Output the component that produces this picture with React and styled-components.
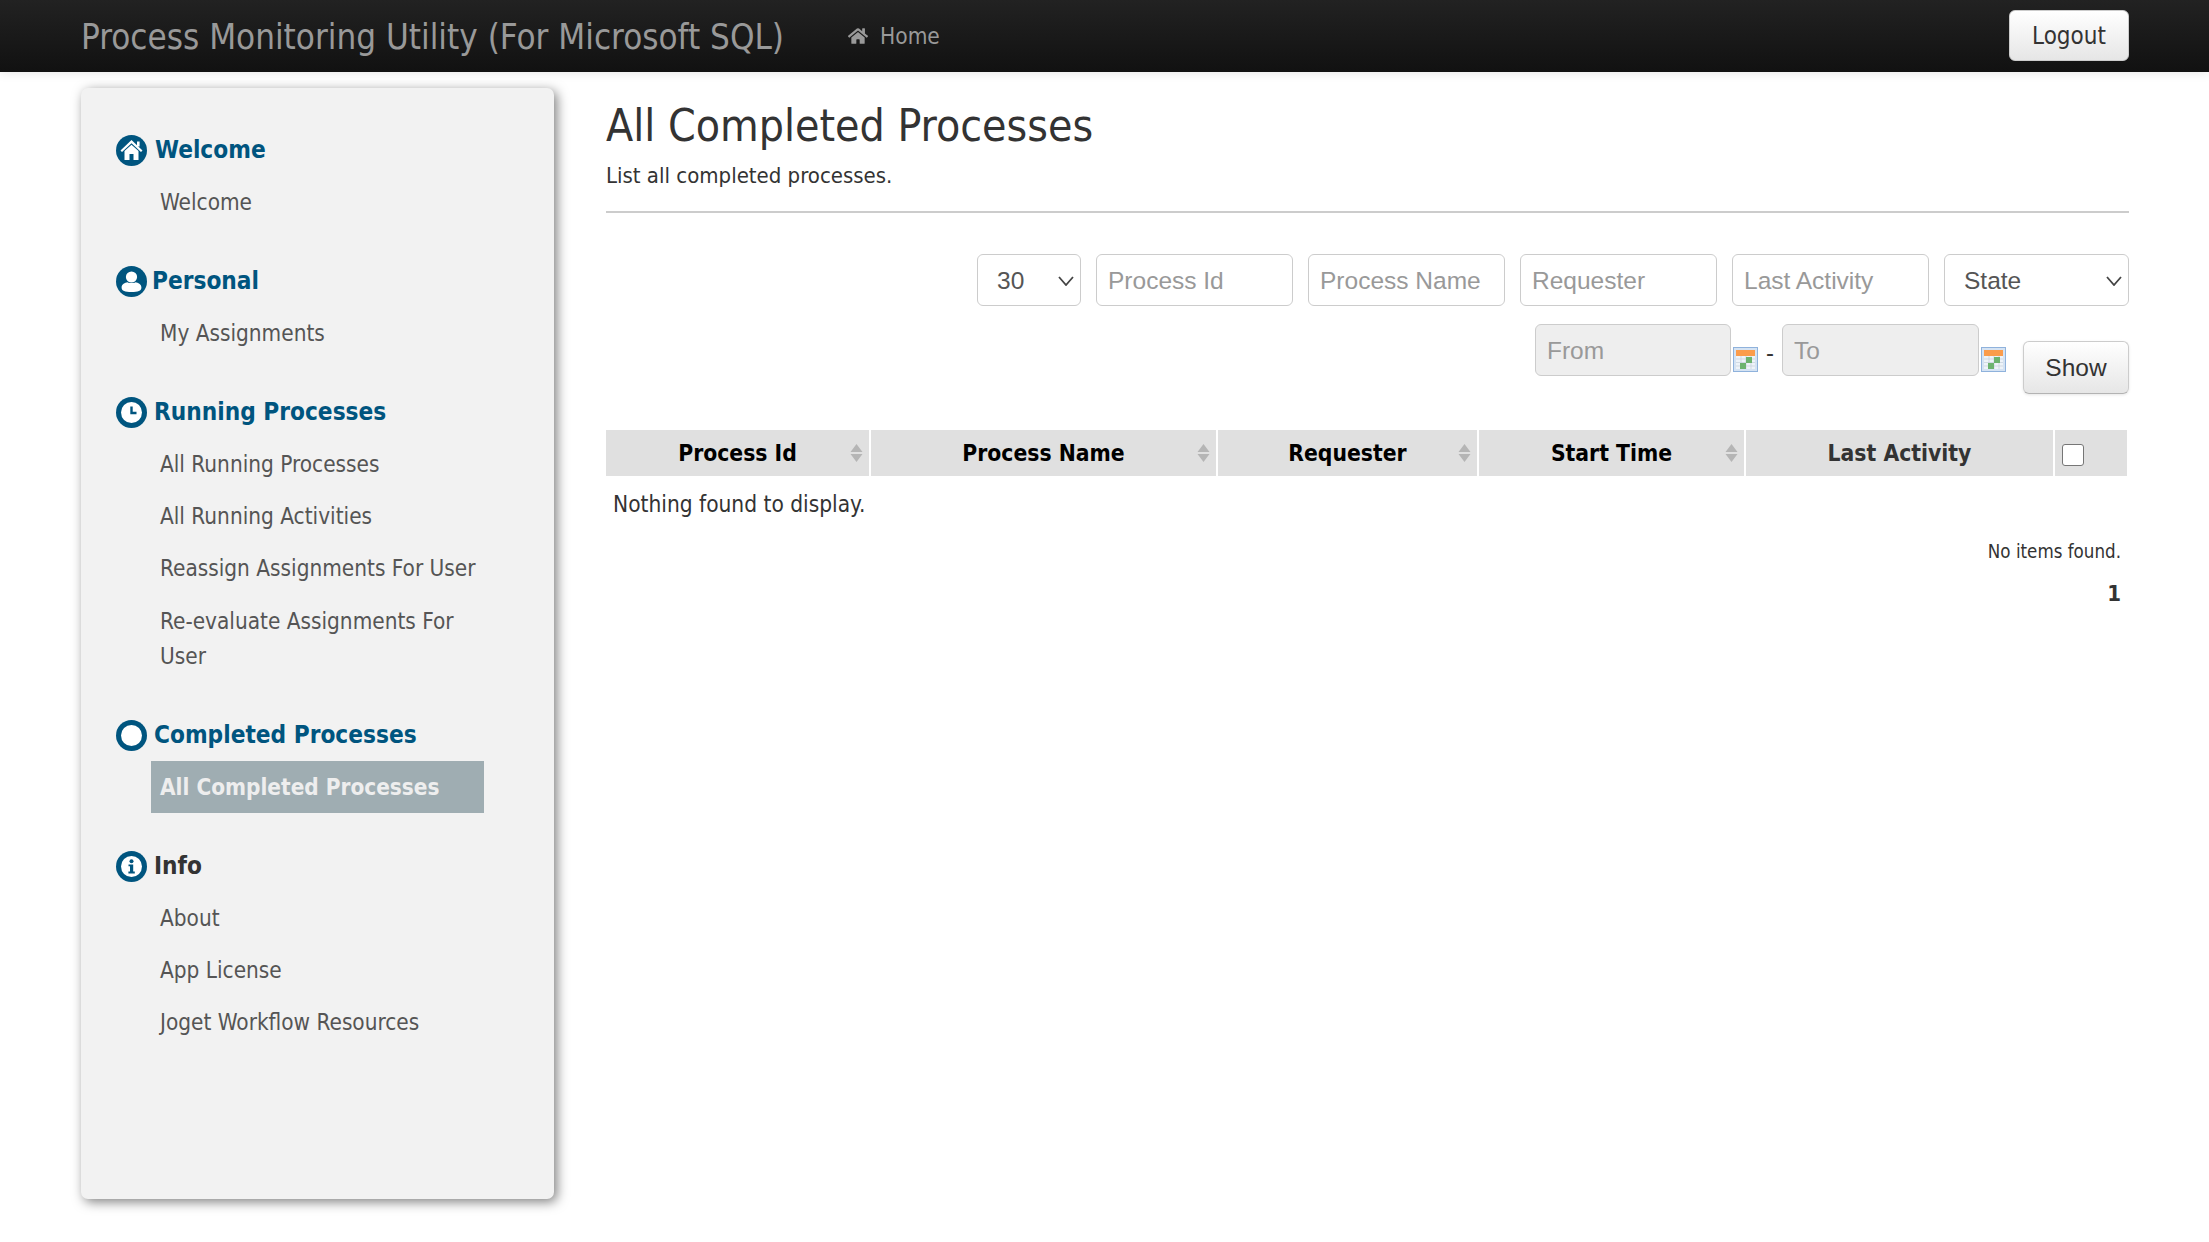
import React from 'react'
import styled, { createGlobalStyle } from 'styled-components'
import { FaHome } from 'react-icons/fa'

const TAHOMA = `"DejaVu Sans Condensed", "DejaVu Sans", sans-serif`
const ARIAL = `"Liberation Sans", Arial, sans-serif`

const Global = createGlobalStyle`
    html, body { margin: 0; padding: 0; background: #fff; }
    body { font-family: ${TAHOMA}; font-stretch: condensed; color: #333; }
    * { box-sizing: border-box; }
`

const Page = styled.div`
    width: 2209px;
    height: 1242px;
    overflow: hidden;
`

// Top bar
const Header = styled.header`
    height: 72px;
    padding: 0 80px 0 81px;
    display: flex;
    align-items: center;
    background: linear-gradient(#222222, #111111);
    box-shadow: 0 1px 10px rgba(0, 0, 0, 0.1);
`
const Brand = styled.div`
    font-size: 34.7px;
    color: #999;
    margin-top: 1px;
`
const HomeLink = styled.a`
    display: flex;
    align-items: center;
    gap: 12px;
    margin-left: 64px;
    font-size: 22.5px;
    color: #999;
`
const LogoutButton = styled.button`
    margin-left: auto;
    margin-top: -2px;
    padding-top: 3px;
    width: 120px;
    height: 51px;
    font-family: ${TAHOMA};
    font-stretch: condensed;
    font-size: 24px;
    color: #333;
    border: 1px solid #ccc;
    border-radius: 6px;
    background: linear-gradient(#ffffff, #e6e6e6);
`

// Body
const Layout = styled.div`
    display: flex;
    align-items: flex-start;
    padding: 16px 80px 0 81px;
    gap: 52px;
`
const Sidebar = styled.nav`
    width: 473px;
    height: 1111px;
    flex: none;
    padding: 43px 35px 0;
    background: #f2f2f2;
    border-radius: 7px;
    box-shadow: 3px 3px 12px rgba(0, 0, 0, 0.5);
`
const Section = styled.section`
    margin-bottom: 34px;
`
const SectionTitle = styled.h3`
    margin: 0 0 7px;
    height: 38px;
    display: flex;
    align-items: center;
    gap: ${p => p.$gap}px;
    font-size: 24.2px;
    font-weight: 700;
    color: ${p => p.$dark ? '#333' : '#00557f'};
`
const MenuItem = styled.a`
    display: block;
    width: 333px;
    margin-left: 35px;
    padding: 8.6px 0 8.6px 9px;
    font-size: 22.4px;
    line-height: 35px;
    font-weight: ${p => p.$active ? 700 : 400};
    color: ${p => p.$active ? '#eeeeee' : '#555'};
    background: ${p => p.$active ? '#9fadb2' : 'transparent'};
`
const IconSvg = styled.svg`
    width: 31px;
    height: 31px;
    flex: none;
`

const Main = styled.main`
    flex: 1;
    min-width: 0;
`
const PageTitle = styled.h1`
    margin: 13px 0 0;
    font-size: 44.2px;
    line-height: 50px;
    font-weight: 400;
    color: #333;
`
const PageSub = styled.p`
    margin: 10px 0 0;
    font-size: 22px;
    line-height: 30px;
    color: #333;
`
const Rule = styled.hr`
    margin: 20px 0 0;
    border: 0;
    border-top: 2px solid #ccc;
`

// Filters
const FilterRow = styled.div`
    display: flex;
    justify-content: flex-end;
    align-items: flex-start;
    gap: 15px;
    margin-top: ${p => p.$top}px;
`
const TextInput = styled.input`
    width: ${p => p.$w || 197}px;
    height: 52px;
    padding: 1px 11px 0;
    font-family: ${ARIAL};
    font-size: 24.5px;
    color: #555;
    border: 1px solid #ccc;
    border-radius: 6px;
    background: ${p => p.readOnly ? '#eeeeee' : '#fff'};
    &::placeholder { color: #999; opacity: 1; }
`
const SelectBox = styled.div`
    position: relative;
    width: ${p => p.$w}px;
    height: 52px;
    padding: 1px 0 0 19px;
    display: flex;
    align-items: center;
    font-family: ${ARIAL};
    font-size: 24.5px;
    color: #555;
    border: 1px solid #ccc;
    border-radius: 6px;
    background: #fff;
    svg { position: absolute; right: 6px; top: 21px; }
`
const DateGroup = styled.div`
    display: flex;
    align-items: flex-start;
`
const CalendarSvg = styled.svg`
    width: 25px;
    height: 25px;
    margin: 23px 0 0 2px;
    flex: none;
`
const Dash = styled.span`
    width: 24px;
    text-align: center;
    font-family: ${ARIAL};
    font-size: 24px;
    line-height: 58px;
    color: #333;
`
const ShowButton = styled.button`
    width: 106px;
    height: 53px;
    margin: 17px 0 0 2px;
    font-family: ${ARIAL};
    font-size: 24.5px;
    color: #333;
    border: 1px solid #ccc;
    border-bottom-color: #b3b3b3;
    border-radius: 6px;
    background: linear-gradient(#ffffff, #e6e6e6);
    box-shadow: 0 1px 3px rgba(0, 0, 0, 0.1);
`

// Table
const Table = styled.table`
    width: 1521px;
    margin-top: 36px;
    border-collapse: collapse;
    table-layout: fixed;
`
const HeadCell = styled.th`
    position: relative;
    height: 46px;
    padding: 0;
    font-size: 22.7px;
    font-weight: 700;
    color: ${p => p.$soft ? '#333' : '#000'};
    background: #e0e0e0;
    border-left: 2px solid #fff;
    &:first-child { border-left: 0; }
    svg { position: absolute; right: 6px; top: 13px; }
`
const Check = styled.span`
    display: block;
    width: 22px;
    height: 22px;
    margin-left: 7px;
    margin-top: 3px;
    border: 1px solid #767676;
    border-radius: 3px;
    background: #fff;
`
const EmptyRow = styled.div`
    padding: 0 0 0 7px;
    margin-top: 11px;
    font-size: 22.5px;
    line-height: 34px;
    color: #333;
`
const Banner = styled.div`
    margin-top: 17px;
    padding-right: 8px;
    text-align: right;
    font-size: 18.6px;
    line-height: 28px;
    color: #333;
`
const PageNum = styled.div`
    margin-top: 14px;
    padding-right: 8px;
    text-align: right;
    font-size: 22px;
    line-height: 28px;
    font-weight: 700;
    color: #333;
`

const Circle = ({ children }) => (
    <IconSvg viewBox="0 0 31 31">
        <circle cx="15.5" cy="15.5" r="15.5" fill="#00557f" />
        {children}
    </IconSvg>
)
const HomeIcon = () => (
    <Circle>
        <path d="M15.5 5 L26.5 15.4 L25 17 L15.5 8.2 L6 17 L4.5 15.4 Z" fill="#fff" />
        <path d="M8.5 16 L15.5 9.8 L22.5 16 V25 H17.5 V19 H13.5 V25 H8.5 Z" fill="#fff" />
        <rect x="21" y="6.5" width="2.6" height="5" fill="#fff" />
    </Circle>
)
const PersonIcon = () => (
    <Circle>
        <circle cx="15.5" cy="11" r="5.6" fill="#fff" />
        <path d="M5.6 21.5 C5.6 18 9 16.6 11.5 16.2 C13.5 17.4 17.5 17.4 19.5 16.2 C22 16.6 25.4 18 25.4 21.5 C25.4 25 22 26 15.5 26 C9 26 5.6 25 5.6 21.5 Z" fill="#fff" />
    </Circle>
)
const ClockIcon = () => (
    <Circle>
        <circle cx="15.5" cy="15.5" r="10.5" fill="#fff" />
        <path d="M15.5 9.5 V16 H20.5" fill="none" stroke="#00557f" strokeWidth="2.4" />
    </Circle>
)
const RingIcon = () => (
    <Circle>
        <circle cx="15.5" cy="15.5" r="10.5" fill="#fff" />
    </Circle>
)
const InfoIcon = () => (
    <Circle>
        <circle cx="15.5" cy="15.5" r="10.5" fill="#fff" />
        <circle cx="15.5" cy="10.2" r="2" fill="#00557f" />
        <path d="M12.5 13.4 H17.2 V20.6 H18.8 V22.4 H12.4 V20.6 H14 V15.2 H12.5 Z" fill="#00557f" />
    </Circle>
)

const Chevron = () => (
    <svg width="16" height="10" viewBox="0 0 16 10">
        <path d="M1 1 L8 9 L15 1" fill="none" stroke="#444" strokeWidth="1.8" />
    </svg>
)
const SortArrows = () => (
    <svg width="13" height="20" viewBox="0 0 13 20">
        <path d="M6.5 1 L12.5 9 H0.5 Z" fill="#b5b5b5" />
        <path d="M6.5 19 L12.5 11 H0.5 Z" fill="#b5b5b5" />
    </svg>
)
const Calendar = () => (
    <CalendarSvg viewBox="0 0 25 25">
        <rect x="0.5" y="0.5" width="24" height="24" fill="#d5e3f3" stroke="#8fb2dc" />
        <rect x="3" y="3" width="19" height="6" fill="#fb9c4b" />
        <rect x="3" y="9" width="19" height="13" fill="#eef3f8" />
        <path d="M3 12 H22 M3 15.5 H22 M3 19 H22 M8 9 V22 M13 9 V22 M18 9 V22" stroke="#c4cfdb" strokeWidth="0.7" />
        <rect x="13" y="10" width="6" height="6" fill="#6db36f" />
        <rect x="7" y="16" width="6" height="6" fill="#6db36f" />
    </CalendarSvg>
)

const menu = [
    { title: 'Welcome', icon: <HomeIcon />, gap: 8, items: ['Welcome'] },
    { title: 'Personal', icon: <PersonIcon />, gap: 5, items: ['My Assignments'] },
    {
        title: 'Running Processes',
        icon: <ClockIcon />,
        gap: 7,
        items: ['All Running Processes', 'All Running Activities', 'Reassign Assignments For User', 'Re-evaluate Assignments For User'],
    },
    { title: 'Completed Processes', icon: <RingIcon />, gap: 7, items: ['All Completed Processes'], active: 'All Completed Processes' },
    { title: 'Info', icon: <InfoIcon />, gap: 7, dark: true, items: ['About', 'App License', 'Joget Workflow Resources'] },
]

const columns = [
    { label: 'Process Id', w: 264, sort: true },
    { label: 'Process Name', w: 347, sort: true },
    { label: 'Requester', w: 261, sort: true },
    { label: 'Start Time', w: 267, sort: true },
    { label: 'Last Activity', w: 309, soft: true },
]

const App = () => {
    return (
        <Page>
            <Global />
            <Header>
                <Brand>Process Monitoring Utility (For Microsoft SQL)</Brand>
                <HomeLink><FaHome size={20} />Home</HomeLink>
                <LogoutButton>Logout</LogoutButton>
            </Header>
            <Layout>
                <Sidebar>
                    {menu.map(s => (
                        <Section key={s.title}>
                            <SectionTitle $dark={s.dark} $gap={s.gap}>{s.icon}{s.title}</SectionTitle>
                            {s.items.map(i => (
                                <MenuItem key={i} $active={i === s.active}>{i}</MenuItem>
                            ))}
                        </Section>
                    ))}
                </Sidebar>
                <Main>
                    <PageTitle>All Completed Processes</PageTitle>
                    <PageSub>List all completed processes.</PageSub>
                    <Rule />
                    <FilterRow $top={41}>
                        <SelectBox $w={104}>30<Chevron /></SelectBox>
                        <TextInput placeholder="Process Id" />
                        <TextInput placeholder="Process Name" />
                        <TextInput placeholder="Requester" />
                        <TextInput placeholder="Last Activity" />
                        <SelectBox $w={185}>State<Chevron /></SelectBox>
                    </FilterRow>
                    <FilterRow $top={18}>
                        <DateGroup>
                            <TextInput readOnly placeholder="From" $w={196} />
                            <Calendar />
                            <Dash>-</Dash>
                            <TextInput readOnly placeholder="To" />
                            <Calendar />
                        </DateGroup>
                        <ShowButton>Show</ShowButton>
                    </FilterRow>
                    <Table>
                        <colgroup>
                            {columns.map(c => <col key={c.label} width={c.w} />)}
                            <col />
                        </colgroup>
                        <thead>
                            <tr>
                                {columns.map(c => (
                                    <HeadCell key={c.label} $soft={c.soft}>
                                        {c.label}{c.sort && <SortArrows />}
                                    </HeadCell>
                                ))}
                                <HeadCell><Check /></HeadCell>
                            </tr>
                        </thead>
                    </Table>
                    <EmptyRow>Nothing found to display.</EmptyRow>
                    <Banner>No items found.</Banner>
                    <PageNum>1</PageNum>
                </Main>
            </Layout>
        </Page>
    )
}

export default App
